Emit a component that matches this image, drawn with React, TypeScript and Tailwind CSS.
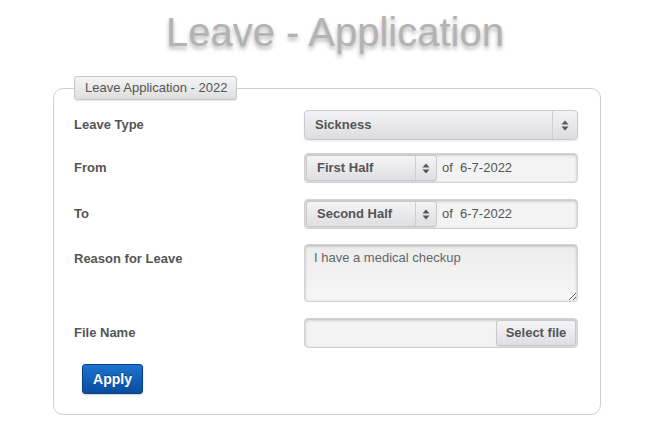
import React from 'react';

function Arrows() {
  return (
    <svg width="8" height="11" viewBox="0 0 8 11" className="fill-[#555]">
      <path d="M4 0.5 L7.5 4.5 L0.5 4.5 Z" />
      <path d="M4 10.5 L7.5 6.5 L0.5 6.5 Z" />
    </svg>
  );
}

function Label({ children }: { children: React.ReactNode }) {
  return <div className="w-[230px] shrink-0 pt-[7px] text-[13px] font-bold text-[#555] leading-[16px]">{children}</div>;
}

function HalfSelect({ value, width }: { value: string; width: string }) {
  return (
    <div
      className={`flex h-[26px] ${width} items-stretch rounded-[3px] border border-[#c8c8c8] bg-gradient-to-b from-[#f4f4f6] to-[#dfdfe3] shadow-[0_1px_1px_rgba(0,0,0,0.08)]`}
    >
      <span className="flex-1 pl-[10px] text-[13px] font-bold leading-[24px] text-[#555]">{value}</span>
      <span className="flex w-[21px] items-center justify-center border-l border-[#cfcfd3]">
        <Arrows />
      </span>
    </div>
  );
}

export default function App() {
  return (
    <div className="min-h-[436px] w-[654px] bg-white font-['Liberation_Sans',Arial,sans-serif]">
      <h1 className="pl-[16px] pt-[8px] text-center text-[40px] leading-[48px] text-[#b3b3b3] [text-shadow:0_3px_4px_rgba(0,0,0,0.3)]">
        Leave - Application
      </h1>

      <fieldset className="mx-[53px] mt-[20px] rounded-[10px] border border-[#cfcfcf] px-[20px] pb-[20px]">
        <legend className="rounded-[3px] border border-[#c6c6c6] bg-gradient-to-b from-[#f5f5f5] to-[#dedede] pl-[10px] pr-[9px] text-[13px] leading-[22px] text-[#555] shadow-[0_1px_1px_rgba(0,0,0,0.1)]">
          Leave Application - 2022
        </legend>

        <div className="mt-[10px] flex flex-col">
          <div className="flex">
            <Label>Leave Type</Label>
            <div className="flex h-[30px] w-[274px] items-stretch rounded-[4px] border border-[#cbcbcf] bg-gradient-to-b from-[#f3f3f5] to-[#dddde1] shadow-[0_1px_2px_rgba(0,0,0,0.1)]">
              <span className="flex-1 pl-[10px] text-[13px] font-bold leading-[28px] text-[#555]">Sickness</span>
              <span className="flex w-[25px] items-center justify-center border-l border-[#cfcfd3]">
                <Arrows />
              </span>
            </div>
          </div>

          <div className="mt-[13px] flex">
            <Label>From</Label>
            <div className="flex h-[30px] w-[274px] items-center rounded-[4px] border border-[#d2d2d2] bg-[#f3f3f3] pl-[1px] shadow-[inset_0_1px_3px_rgba(0,0,0,0.25)]">
              <HalfSelect value="First Half" width="w-[131px]" />
              <span className="ml-[5px] text-[13px] text-[#555]">of&nbsp; 6-7-2022</span>
            </div>
          </div>

          <div className="mt-[16px] flex">
            <Label>To</Label>
            <div className="flex h-[30px] w-[274px] items-center rounded-[4px] border border-[#d2d2d2] bg-[#f3f3f3] pl-[1px] shadow-[inset_0_1px_3px_rgba(0,0,0,0.25)]">
              <HalfSelect value="Second Half" width="w-[131px]" />
              <span className="ml-[5px] text-[13px] text-[#555]">of&nbsp; 6-7-2022</span>
            </div>
          </div>

          <div className="mt-[15px] flex">
            <Label>Reason for Leave</Label>
            <textarea
              readOnly
              defaultValue="I have a medical checkup"
              className="h-[58px] w-[274px] resize rounded-[4px] border border-[#d2d2d2] bg-gradient-to-b from-[#ececec] to-[#f6f6f6] px-[9px] pt-[5px] text-[13px] leading-[16px] text-[#666] shadow-[inset_0_1px_3px_rgba(0,0,0,0.25)] outline-none font-['Liberation_Sans',Arial,sans-serif]"
            />
          </div>

          <div className="mt-[16px] flex">
            <Label>File Name</Label>
            <div className="flex h-[30px] w-[274px] items-center justify-end rounded-[4px] border border-[#d2d2d2] bg-[#f3f3f3] pr-[1px] shadow-[inset_0_1px_3px_rgba(0,0,0,0.25)]">
              <button className="h-[26px] w-[80px] rounded-[3px] border border-[#c8c8c8] bg-gradient-to-b from-[#f4f4f6] to-[#dfdfe3] text-[13px] font-bold text-[#555] shadow-[0_1px_1px_rgba(0,0,0,0.08)]">
                Select file
              </button>
            </div>
          </div>

          <div className="mt-[16px] pl-[8px]">
            <button className="h-[30px] w-[61px] rounded-[3px] border border-[#0a3f8c] bg-gradient-to-b from-[#1c73cf] to-[#0a4c9f] text-[14px] font-bold text-white [text-shadow:0_-1px_0_rgba(0,0,0,0.35)] shadow-[0_1px_2px_rgba(0,0,0,0.2)]">
              Apply
            </button>
          </div>
        </div>
      </fieldset>
    </div>
  );
}
